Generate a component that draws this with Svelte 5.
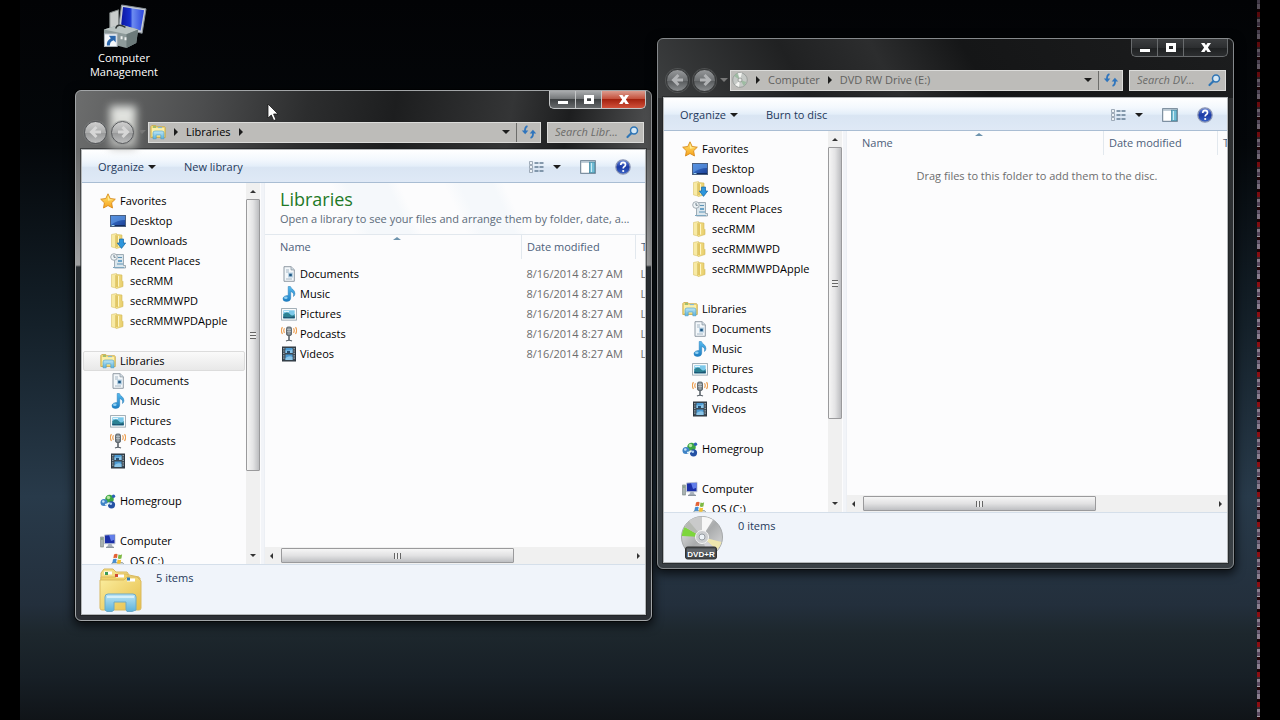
<script>
  const navGroups = [
    {
      label: "Favorites",
      icon: "star",
      items: [
        { label: "Desktop", icon: "desktop" },
        { label: "Downloads", icon: "downloads" },
        { label: "Recent Places", icon: "recent" },
        { label: "secRMM", icon: "folder" },
        { label: "secRMMWPD", icon: "folder" },
        { label: "secRMMWPDApple", icon: "folder" },
      ],
    },
    {
      label: "Libraries",
      icon: "libraries",
      items: [
        { label: "Documents", icon: "documents" },
        { label: "Music", icon: "music" },
        { label: "Pictures", icon: "pictures" },
        { label: "Podcasts", icon: "podcasts" },
        { label: "Videos", icon: "videos" },
      ],
    },
    { label: "Homegroup", icon: "homegroup", items: [] },
    { label: "Computer", icon: "computer", items: [{ label: "OS (C:)", icon: "drive" }] },
  ];

  const libraries = ["Documents", "Music", "Pictures", "Podcasts", "Videos"];

  const windows = [
    {
      id: "libraries",
      active: true,
      icon: "libraries",
      path: ["Libraries"],
      search: "Search Libr...",
      action: "New library",
      selected: "Libraries",
      title: "Libraries",
      subtitle: "Open a library to see your files and arrange them by folder, date, a...",
      rows: libraries.map((name) => ({
        name,
        icon: name.toLowerCase(),
        date: "8/16/2014 8:27 AM",
        type: "Library",
      })),
      detailIcon: "bigLibrary",
      status: "5 items",
    },
    {
      id: "dvd",
      active: false,
      icon: "disc",
      path: ["Computer", "DVD RW Drive (E:)"],
      search: "Search DV...",
      action: "Burn to disc",
      selected: "",
      rows: [],
      message: "Drag files to this folder to add them to the disc.",
      detailIcon: "bigDisc",
      status: "0 items",
    },
  ];
</script>

{#snippet icon(name)}
  <svg class="icon" viewBox="0 0 16 16" aria-hidden="true">
    {#if name === "star"}
      <path d="M8 .8l2.2 4.7 5.1.7-3.7 3.6.9 5.2L8 12.5 3.5 15l.9-5.2L.7 6.2l5.1-.7z" fill="url(#gold)" stroke="#d88a1c" stroke-width=".9" />
      <path d="M8 2.6l1.5 3.6 3.7.5-5.2 1z" fill="#fff3a8" opacity=".8" />
    {:else if name === "desktop"}
      <rect x=".5" y="2.5" width="15" height="11" fill="url(#screen)" stroke="#4a5f80" />
      <path d="M1 3h14v4Q7 7 1 12z" fill="#6ca5ec" opacity=".55" />
      <path d="M1 12.5h14" stroke="#122c60" />
      <path d="M1.5 12.5h3" stroke="#9fd4f0" />
    {:else if name === "folder" || name === "downloads"}
      <path d="M1.5 1.500l5-1v14.600l-5-1.200z" fill="#f8eaa4" stroke="#dcc56c" stroke-width=".6" />
      <path d="M5.500 2.500l1.500-1 5 .5v5.500l1 1v5l-6.500 2-1-.8z" fill="url(#folder)" stroke="#d3ba5c" stroke-width=".6" />
      <path d="M7 2.500v11.500" stroke="#cfae45" />
      <path d="M8.500 3v10.500" stroke="#fff6c4" />
      {#if name === "downloads"}
        <path d="M9.500 6h4v4h2.2l-4.2 5.4L7.3 10h2.2z" fill="#2f96dc" stroke="#1768a8" stroke-width=".7" />
      {/if}
    {:else if name === "recent"}
      <path d="M4.500 1.500h9v11h2v2.500h-11z" fill="#dbe6ec" stroke="#8c9aa5" stroke-width=".8" />
      <path d="M8 4.500h4M7 11h6" stroke="#5d93b6" />
      <path d="M8 7h4v2H8z" fill="#6ba3c8" />
      <circle cx="4" cy="4" r="3.300" fill="#eff4f6" stroke="#9aa4ab" stroke-width=".9" />
      <path d="M4 2v2.300h1.700" fill="none" stroke="#526575" stroke-width=".8" />
      <path d="M3 14.500h11" stroke="#7ea7c0" />
    {:else if name === "libraries"}
      <path d="M.8 2.500l1-1h4l1 1.200h7.800l.7 1v9.800H.8z" fill="#f2d978" stroke="#c6a74a" stroke-width=".8" />
      <path d="M2 4h12v8H2z" fill="#fbefa9" />
      <path d="M3 3h3" stroke="#55a561" />
      <path d="M8 3.600h4" stroke="#7ab8dd" />
      <path d="M3 14.800V9q0-2 2-2h7q2 0 2 2v5.800h-3.200V11H6.200v3.800z" fill="url(#stand)" stroke="#4b9bc2" stroke-width=".6" />
    {:else if name === "documents"}
      <path d="M3 .7h7l3.300 3v11.600H3z" fill="#f3f7fa" stroke="#84909b" stroke-width=".9" />
      <path d="M10 .7v3.200h3.300" fill="#d4dfe7" stroke="#84909b" stroke-width=".7" />
      <path d="M5 4h3M5 6h3M5 13h6" stroke="#91a5b5" stroke-width=".8" />
      <rect x="7" y="6.500" width="5" height="5" fill="#b9d2e3" />
      <rect x="8.200" y="7.700" width="2.600" height="2.600" fill="#1d5683" />
    {:else if name === "music"}
      <path d="M7.200 .5h2.200c.2 2.200 4.600 3.100 4.500 7-.1 1.600-.8 2.500-1.400 3 .7-2.800-.6-4.300-2.800-5v6.700q-.2 3.300-4.200 3.300-3.700-.2-3.500-2.800Q2.200 9.700 7.200 9.500z" fill="url(#note)" stroke="#2079b4" stroke-width=".5" />
      <ellipse cx="4.800" cy="11.700" rx="1.800" ry="1.200" fill="#a9e0fa" opacity=".8" />
    {:else if name === "pictures"}
      <rect x=".6" y="2.600" width="14.800" height="11.500" fill="#fff" stroke="#94a3ad" stroke-width=".9" />
      <rect x="2.300" y="4.300" width="11.400" height="8" fill="#7bc8ea" />
      <path d="M2.300 8q4-3 6.500 0t4.900 0v4.300H2.300z" fill="#2c8293" />
      <path d="M2.300 10.500q4 1.500 11.400-.3v2.100H2.300z" fill="#1c5372" />
      <path d="M3 5.500h5" stroke="#e4f6fc" />
    {:else if name === "podcasts"}
      <rect x="5.500" y="1" width="5" height="8.500" rx="1.500" fill="#7b848b" stroke="#4d555c" stroke-width=".8" />
      <path d="M6 3.500h4M6 5.500h4M8 1.500v7" stroke="#bfc7cc" stroke-width=".7" />
      <path d="M8 9.500v5" stroke="#5b636a" stroke-width="1.600" />
      <path d="M5 15q3-1.500 6 0" fill="none" stroke="#5b636a" stroke-width="1.200" />
      <path d="M3.500 2.200q-1.500 2.500 0 4.600M1.500 1.200Q-.8 4.500 1.500 8M12.500 2.200q1.500 2.500 0 4.600M14.500 1.200q2.300 3.300 0 6.800" fill="none" stroke="#eda053" stroke-width="1.200" />
    {:else if name === "videos"}
      <rect x="1.500" y="1" width="13" height="14" fill="#3d4a55" stroke="#2d3740" />
      <path d="M2.800 2v12M13.200 2v12" stroke="#a9b4bb" stroke-width="1.200" stroke-dasharray="1.200 1.200" />
      <path d="M4.500 2h7v5h-7zM4.500 8.500h7V14h-7z" fill="#4d9bd4" />
      <path d="M4.500 4q4 1.500 7-1v4h-7zM4.500 12q4-3 7-1v3h-7z" fill="#8cc6e8" />
      <path d="M6 5h3v2H6z" fill="#274f73" />
    {:else if name === "homegroup"}
      <circle cx="9.500" cy="6" r="4.300" fill="#3da745" />
      <circle cx="8.500" cy="4.500" r="1.700" fill="#b7e6a4" />
      <circle cx="4" cy="9.500" r="3.500" fill="#3f83c6" />
      <circle cx="3.300" cy="8.500" r="1.300" fill="#c0e2f7" />
      <circle cx="11.500" cy="11.800" r="3.600" fill="#2451a4" />
      <circle cx="10.800" cy="10.700" r="1.300" fill="#aed0f4" />
      <circle cx="13.500" cy="3.200" r="1.700" fill="#2c62b5" />
      <path d="M5 11.500q3 .5 4.500-2" fill="none" stroke="#e6f5f9" stroke-width="1.500" />
    {:else if name === "computer"}
      <rect x=".7" y="4" width="2.600" height="10" fill="#a8b2b1" stroke="#6f7a79" stroke-width=".6" />
      <path d="M1.300 6h1.300" stroke="#4c8944" />
      <path d="M4.500 2l10.500-.7v9.500H4.500z" fill="#1b2fa8" stroke="#c4cad6" />
      <path d="M9 2l5.500-.3v5L11 8z" fill="#627eea" />
      <path d="M8.500 11h3l1.500 3H7z" fill="#aab3bd" />
      <path d="M6 14.300h8" stroke="#707b86" />
    {:else if name === "drive"}
      <path d="M2.500 9.500h10l3 3.500H.5z" fill="#d1d9d8" stroke="#7c8b8d" stroke-width=".7" />
      <path d="M.5 13h15v2.500H.5z" fill="#7ca5af" />
      <path d="M4 1.500q2-1.300 3.600-.3L7 5q-2-.7-3.700.3z" fill="#e36235" />
      <path d="M8.500 1.500q2 .9 3.600-.2L11.400 5.500q-1.700.8-3.500 0z" fill="#7eb944" />
      <path d="M3 6.300q1.900-1 3.700-.2L6 10q-2-.7-3.700.3z" fill="#468ed1" />
      <path d="M7.600 6.500q1.900.9 3.600-.1l-.7 4q-1.700.9-3.500 0z" fill="#f3c034" />
    {:else if name === "disc"}
      <circle cx="8" cy="8" r="7.300" fill="#c5c9c6" stroke="#8a8f8c" stroke-width=".7" />
      <path d="M8 8L2 4l3-3zM8 8l6.500 2-2.500 4z" fill="#9ebba2" />
      <path d="M8 8L6 1l4-.2zM8 8l-1 7-4-2z" fill="#f3f4f1" />
      <circle cx="8" cy="8" r="2" fill="#e9eae8" stroke="#858a87" stroke-width=".7" />
    {:else if name === "search"}
      <circle cx="10" cy="6.500" r="3.500" fill="#d5e7f4" stroke="#2f75b5" stroke-width="1.500" />
      <path d="M7 9.500L3.500 13" stroke="#2f75b5" stroke-width="2.200" stroke-linecap="round" />
    {:else if name === "refresh"}
      <path d="M6.500 2.200Q3.700 3 4 7.500" fill="none" stroke="#2f75bd" stroke-width="1.800" />
      <path d="M.8 6.500h6.500L4.200 10.300z" fill="#2f75bd" />
      <path d="M9.500 13.800q2.800-.8 2.500-5.300" fill="none" stroke="#2f75bd" stroke-width="1.800" />
      <path d="M15.200 9.500H8.700l3.200-3.800z" fill="#2f75bd" />
    {:else if name === "views"}
      <path d="M1.500 2.500h3v3h-3zM1.500 6.500h3v3h-3zM1.500 10.500h3v3h-3z" fill="#edf2f6" stroke="#8b99a8" stroke-width=".8" />
      <path d="M6.500 4h9M6.500 8h9M6.500 12h9" stroke="#637c93" stroke-width="1.300" stroke-dasharray="4 1" />
    {:else if name === "preview"}
      <rect x=".7" y="1.700" width="14.600" height="12.600" fill="#fff" stroke="#65798b" />
      <path d="M1 3h14" stroke="#a7b9c7" stroke-width="1.400" />
      <rect x="9.500" y="3.200" width="5.200" height="10.500" fill="#70bcd5" stroke="#458ba4" stroke-width=".8" />
      <path d="M11.500 4v9" stroke="#cdebf2" />
    {:else if name === "help"}
      <circle cx="8" cy="8" r="7.200" fill="url(#helpBlue)" stroke="#8d97b4" stroke-width="1.200" />
      <path d="M5.700 6q.2-2.600 2.400-2.600 2.400.1 2.400 2.300 0 1.200-1.400 2-.9.500-.9 1.700" fill="none" stroke="#fff" stroke-width="1.700" />
      <circle cx="8.200" cy="12" r="1.100" fill="#fff" />
    {/if}
  </svg>
{/snippet}

{#snippet caret(dir)}
  <span class="caret {dir}" aria-hidden="true"></span>
{/snippet}

<svg class="defs" aria-hidden="true">
  <defs>
    <linearGradient id="gold" x2="0" y2="1"><stop stop-color="#ffe873" /><stop offset="1" stop-color="#f7a11b" /></linearGradient>
    <linearGradient id="screen" x2="1" y2="1"><stop stop-color="#3d7bd6" /><stop offset="1" stop-color="#1b3f94" /></linearGradient>
    <linearGradient id="folder" x2="1" y2="0"><stop stop-color="#f7e48c" /><stop offset="1" stop-color="#e6cc6b" /></linearGradient>
    <linearGradient id="stand" x2="0" y2="1"><stop stop-color="#bde6f5" /><stop offset="1" stop-color="#5db2db" /></linearGradient>
    <linearGradient id="note" x2="0" y2="1"><stop stop-color="#55b9ee" /><stop offset="1" stop-color="#1d7fc4" /></linearGradient>
    <linearGradient id="helpBlue" x2="0" y2="1"><stop stop-color="#6c8be0" /><stop offset=".5" stop-color="#1c3aa4" /><stop offset="1" stop-color="#3c66c8" /></linearGradient>
    <linearGradient id="bigFolder" x2="1" y2="1"><stop stop-color="#fbeea0" /><stop offset="1" stop-color="#e6bd45" /></linearGradient>
    <linearGradient id="silver" x2="1" y2="1"><stop stop-color="#f4f4f4" /><stop offset=".5" stop-color="#a9abac" /><stop offset="1" stop-color="#e4e4e4" /></linearGradient>
    <linearGradient id="blueScreen" x2="1" y2="0"><stop stop-color="#0b16a0" /><stop offset=".4" stop-color="#1731d0" /><stop offset=".5" stop-color="#6d8cf0" /><stop offset="1" stop-color="#2a44dc" /></linearGradient>
  </defs>
</svg>

<main class="desktop">
  <a class="shortcut" href="#computer-management">
    <svg viewBox="0 0 46 46" aria-hidden="true">
      <path d="M8 10l9-3v22l-9 3z" fill="#c8cccb" stroke="#7e8584" />
      <path d="M20 2l25 4-4 25-24-6z" fill="#c9cfd6" stroke="#858d95" />
      <path d="M21.500 4L43 7.300 39.500 28l-20-5z" fill="url(#blueScreen)" />
      <path d="M2 27l17-5 18 5-2 14-10 5-23-6z" fill="#8d9a9a" />
      <path d="M2 27l17-5 18 5-12 5z" fill="#b9c3c2" />
      <path d="M25 32l12-5-2 14-10 5z" fill="#6c7a7a" />
      <path d="M14 26q2-6 10-1" fill="none" stroke="#2e3434" stroke-width="1.500" />
      <path d="M20 34v3M24 35v3" stroke="#edf0ef" stroke-width="2" />
      <rect x="2.500" y="31.500" width="13" height="13" fill="#f4f7fa" stroke="#a7b0b8" />
      <path d="M5 43.500q-.6-5 4-7.500l-2-2.500h7v7L12 38q-4 1-4 5.500z" fill="#2a66ac" />
    </svg>
    <span>Computer<br />Management</span>
  </a>

  {#each windows as win}
    <section class="window {win.id}" class:active={win.active} aria-label={win.path.join(" ")}>
      <header class="glass">
        <div class="caption">
          <button class="min" aria-label="Minimize"><svg viewBox="0 0 16 12"><path d="M3 7h10v3H3z" /></svg></button>
          <button class="max" aria-label="Maximize"><svg viewBox="0 0 16 12"><path fill-rule="evenodd" d="M3 1h10v9H3zM6 4v3h4V4z" /></svg></button>
          <button class="close" aria-label="Close"><svg viewBox="0 0 16 12"><path d="M3 1h3.500L8 3.200 9.500 1H13L9.900 5.500 13 10H9.500L8 7.800 6.500 10H3l3.100-4.500z" /></svg></button>
        </div>
        <div class="location">
          <div class="travel">
            <button aria-label="Back"><svg viewBox="0 0 16 16"><path d="M8.500 3L3.500 8l5 5M4 8h9" /></svg></button>
            <button aria-label="Forward"><svg viewBox="0 0 16 16"><path d="M7.500 3l5 5-5 5M12 8H3" /></svg></button>
            {@render caret("down")}
          </div>
          <div class="address">
            <div class="crumbs">
              {@render icon(win.icon)}
              {@render caret("right")}
              {#each win.path as part, i}
                <button>{part}</button>
                {#if win.active || i < win.path.length - 1}{@render caret("right")}{/if}
              {/each}
            </div>
            <button class="drop" aria-label="Previous locations">{@render caret("down")}</button>
            <button class="refresh" aria-label="Refresh">{@render icon("refresh")}</button>
          </div>
          <label class="search">
            <input type="text" placeholder={win.search} aria-label="Search" />
            {@render icon("search")}
          </label>
        </div>
      </header>

      <div class="client">
        <div class="toolbar">
          <button>Organize {@render caret("down")}</button>
          <button>{win.action}</button>
          <div class="tools">
            <button aria-label="Change your view">{@render icon("views")}{@render caret("down")}</button>
            <button aria-label="Show the preview pane">{@render icon("preview")}</button>
            <button aria-label="Help">{@render icon("help")}</button>
          </div>
        </div>

        <div class="panes">
          <nav>
            {#each navGroups as group}
              <ul>
                <li>
                  <a href="#{group.label}" class:selected={group.label === win.selected}>{@render icon(group.icon)}{group.label}</a>
                </li>
                {#each group.items as item}
                  <li class="child">
                    <a href="#{item.label}">{@render icon(item.icon)}{item.label}</a>
                  </li>
                {/each}
              </ul>
            {/each}
          </nav>
          <div class="scroll vertical" aria-hidden="true">
            {@render caret("up")}
            <div class="track"><div class="thumb"><i></i></div></div>
            {@render caret("down")}
          </div>

          <div class="content">
            {#if win.title}
              <div class="heading">
                <h1>{win.title}</h1>
                <p>{win.subtitle}</p>
              </div>
            {/if}
            <div class="files">
              <table>
                <thead>
                  <tr>
                    <th class="name">Name<span class="sort"></span></th>
                    <th class="date">Date modified</th>
                    <th class="type">Type</th>
                  </tr>
                </thead>
                <tbody>
                  {#each win.rows as row}
                    <tr>
                      <td><div class="file">{@render icon(row.icon)}{row.name}</div></td>
                      <td class="muted">{row.date}</td>
                      <td class="muted">{row.type}</td>
                    </tr>
                  {/each}
                </tbody>
              </table>
              {#if win.message}
                <p class="message">{win.message}</p>
              {/if}
            </div>
            <div class="scroll horizontal" aria-hidden="true">
              {@render caret("left")}
              <div class="track"><div class="thumb"><i></i></div></div>
              {@render caret("right")}
            </div>
          </div>
        </div>

        <footer>
          {#if win.detailIcon === "bigLibrary"}
            <svg class="big" viewBox="0 0 44 44" aria-hidden="true">
              <path d="M3 5l3-4h9l3 3h11l2 3 10 2v31H3z" fill="#f3dd83" stroke="#d9b960" />
              <path d="M6 3.500h8v3H6z" fill="#fff" /><path d="M7 4h3v3H7z" fill="#3d9a55" />
              <path d="M3 9h14l3-3h9l3 4h10v30H3z" fill="#f0d267" stroke="#d9b960" />
              <path d="M18 6.500h8v3h-8z" fill="#fff" /><path d="M17 6h3v3h-3z" fill="#cf4a32" />
              <path d="M2 12h24l3-3h10l4 4v27q0 2-2 2H4q-2 0-2-2z" fill="url(#bigFolder)" stroke="#d9b960" />
              <path d="M29 10.500h8v3h-8z" fill="#fff" /><path d="M29 9.500h3v3h-3z" fill="#2f7bb3" />
              <path d="M7 42V29q0-3 3-3h25q3 0 3 3v13l-4 1.500h-5l-1-2V34H16v8l-2 1.500H9z" fill="url(#stand)" stroke="#6caac8" />
              <path d="M9 29h27" stroke="#e1f5fb" stroke-width="2" opacity=".8" />
            </svg>
          {:else}
            <svg class="big" viewBox="0 0 44 44" aria-hidden="true">
              <circle cx="22" cy="21" r="20.500" fill="url(#silver)" stroke="#a5a8a9" />
              <path d="M22 21L9 5Q15 .5 22 .8z" fill="#c9caca" />
              <path d="M22 21L22 .8q6 0 11 3z" fill="#f7f7f7" />
              <path d="M22 21L1.700 20q.4-5 3-9z" fill="#7dd63c" />
              <path d="M22 21L4.700 11Q6 8.500 9 5z" fill="#b5b9b2" />
              <path d="M22 21l19.500 5q-1 4.500-4.500 8z" fill="#efe7ae" />
              <path d="M22 21l15 13q-4 4.500-9 6z" fill="#d3d3d8" />
              <circle cx="22" cy="21" r="6.500" fill="#cbcdd0" stroke="#f4f4f4" />
              <circle cx="22" cy="21" r="3" fill="#eef3f8" stroke="#979da3" />
              <rect x="5.500" y="31" width="31" height="12" rx="2" fill="#44484b" stroke="#333" />
              <path d="M7 32.500h28v4H7z" fill="#777c80" opacity=".6" />
              <text x="21" y="40.500" text-anchor="middle">DVD+R</text>
            </svg>
          {/if}
          <span>{win.status}</span>
        </footer>
      </div>
    </section>
  {/each}

  <svg class="cursor" viewBox="0 0 12 19" aria-hidden="true">
    <path d="M1 1v14l3.300-3 2.400 5.600 2.200-1L6.600 11H11z" fill="#fff" stroke="#1a1a1a" stroke-width=".8" />
  </svg>
  <div class="edge"></div>
</main>

<style>
  :global(body) {
    margin: 0;
    background: #000;
  }

  .desktop {
    position: relative;
    min-height: 100vh;
    margin: 0 20px;
    overflow: hidden;
    font: 11px/20px "Open Sans", "Noto Sans", sans-serif;
    color: #000;
    background: linear-gradient(#020305, #04070a 20%, #142029 45%, #283a4a 69%, #232f3c 84%, #1d272d 88%, #171f26 94%, #101418);
  }

  .defs {
    position: absolute;
    width: 0;
    height: 0;
  }

  button {
    padding: 0;
    border: 0;
    background: none;
    font: inherit;
    color: inherit;
  }

  a {
    color: inherit;
    text-decoration: none;
  }

  .icon {
    flex: none;
    display: block;
    width: 16px;
    height: 16px;
  }

  .caret {
    flex: none;
    display: inline-block;
    width: 0;
    height: 0;
    border: 4px solid transparent;
    color: #1c1c1c;
  }

  .caret.down {
    border-top-color: currentColor;
    border-bottom: 0;
  }

  .caret.up {
    border-bottom-color: currentColor;
    border-top: 0;
  }

  .caret.right {
    border-left-color: currentColor;
    border-right: 0;
  }

  .caret.left {
    border-right-color: currentColor;
    border-left: 0;
  }

  .shortcut {
    position: absolute;
    top: 3px;
    left: 64px;
    width: 80px;
    display: flex;
    flex-direction: column;
    align-items: center;
    gap: 3px;
    line-height: 14px;
    text-align: center;
    color: #fff;
    text-shadow: 0 1px 2px #000;
  }

  .shortcut svg {
    width: 45px;
    height: 45px;
  }

  .window {
    position: absolute;
    box-sizing: border-box;
    width: calc(45vw + 1px);
    padding: 0 5px 5px;
    border: 1px solid #85898c;
    border-radius: 6px;
    background: linear-gradient(#2b2c2d, #222426 30%, #30363a 60%, #33393e);
    box-shadow: 0 0 0 1px #0009, 0 3px 10px 2px #000a;
  }

  .window.libraries {
    top: 90px;
    left: 55px;
    border-color: #a2a5a7;
    background:
      linear-gradient(100deg, #6c6d6d, #4c4d4e 22%, #2c2d2e 40%, #1d1e1f 55%, #343536 75%, #1d1e1f 85%, #515253) 0 0 / 100% 59px no-repeat,
      linear-gradient(#6a6b6b 60px, #a0a1a2 174px, #2a2f33 176px, #2d3035);
  }

  .window.dvd {
    top: 38px;
    right: 26px;
    background:
      linear-gradient(60deg, #3d3f40, #202122 25%, #2c2d2e 40%, #151617 55%, #1c1d1e) 0 0 / 100% 59px no-repeat,
      linear-gradient(#303132, #2a2e31 50%, #3a4045);
  }

  /* desktop icon label showing through the glass */
  .active .glass::before {
    content: "";
    position: absolute;
    top: 15px;
    left: 34px;
    width: 26px;
    height: 42px;
    background: linear-gradient(#e9ebe8, #d3d4cf 60%, #a8a9a8);
    filter: blur(4px);
  }

  .caption {
    display: flex;
    justify-content: flex-end;
    height: 18px;
  }

  .caption button {
    box-sizing: border-box;
    width: 26px;
    border: 1px solid #686b6d;
    border-width: 0 0 1px 1px;
    background: linear-gradient(#3c3e40, #2c2e30 50%, #1e2021 50%, #2c2e30);
  }

  .caption button.min {
    border-bottom-left-radius: 5px;
  }

  .caption button.close {
    width: 45px;
    border-right-width: 1px;
    border-bottom-right-radius: 5px;
  }

  .caption svg {
    display: block;
    width: 16px;
    height: 12px;
    margin: 0 auto;
    fill: #fff;
  }

  .active .caption button {
    border-color: #c4c6c7;
    background: linear-gradient(#a9abad, #76797b 45%, #3e4143 50%, #66696b);
  }

  .active .caption button.close {
    background: linear-gradient(#dc9c8e, #c5523e 45%, #a32310 50%, #d1503a);
  }

  .location {
    position: relative;
    display: flex;
    align-items: center;
    height: 22px;
    padding: 12px 2px 6px 3px;
  }

  .travel {
    display: flex;
    align-items: center;
    gap: 4px;
    color: #8c8e90;
  }

  .travel button {
    box-sizing: border-box;
    width: 23px;
    height: 23px;
    border: 1px solid #3a3c3d;
    border-radius: 50%;
    background: linear-gradient(#96989a, #6c6f71 50%, #55585a 50%, #8b8e90);
    box-shadow: 0 0 0 1px #85878855;
  }

  .active .travel button {
    border-color: #55575a;
    background: linear-gradient(#cfcfcf, #abacac 50%, #969798 50%, #bcbdbd);
  }

  .travel svg {
    display: block;
    width: 16px;
    height: 16px;
    margin: auto;
    fill: none;
    stroke: #b2b4b6;
    stroke-width: 3;
  }

  .active .travel svg {
    stroke: #d6d6d6;
  }

  .travel .caret {
    color: #777;
  }

  .address {
    flex: 1;
    display: flex;
    box-sizing: border-box;
    height: 21px;
    margin: 0 6px 0 2px;
    border: 1px solid #dcdcda;
    background: #bdbcb9;
  }

  .crumbs {
    flex: 1;
    display: flex;
    align-items: center;
    gap: 8px;
    padding-left: 1px;
  }

  .dvd .crumbs {
    color: #62625f;
  }

  .address .drop {
    width: 20px;
    display: grid;
    place-items: center;
  }

  .address .refresh {
    width: 24px;
    display: grid;
    place-items: center;
    border-left: 1px solid #6d6d6b;
  }

  .search {
    box-sizing: border-box;
    display: flex;
    align-items: center;
    width: 97px;
    height: 21px;
    padding: 0 3px 0 7px;
    border: 1px solid #dcdcda;
    background: #bdbcb9;
  }

  .search input {
    flex: 1;
    min-width: 0;
    padding: 0;
    border: 0;
    outline: 0;
    background: none;
    font: inherit;
  }

  .search input::placeholder {
    font-style: italic;
    color: #6b6b69;
    opacity: 1;
  }

  .client {
    border: 1px solid #b4b7b9;
    background: #fcfcfd;
    box-shadow: 0 0 0 1px #1a1c1e88;
  }

  .toolbar {
    box-sizing: border-box;
    display: flex;
    align-items: center;
    gap: 28px;
    height: 33px;
    padding: 2px 14px 0 16px;
    border-bottom: 1px solid #a9bdd3;
    background: linear-gradient(#fff, #f3f8fd 30%, #e4eef9 50%, #d9e5f3 55%, #dfe9f6);
    color: #1e395b;
  }

  .toolbar button {
    display: flex;
    align-items: center;
    gap: 4px;
  }

  .tools {
    display: flex;
    gap: 19px;
    margin-left: auto;
  }

  .tools button {
    gap: 9px;
  }

  .panes {
    display: flex;
    height: 381px;
  }

  nav {
    width: 164px;
    padding-top: 8px;
    box-sizing: border-box;
    overflow: hidden;
  }

  ul {
    margin: 0 0 20px;
    padding: 0;
    list-style: none;
  }

  nav a {
    display: flex;
    align-items: center;
    gap: 4px;
    box-sizing: border-box;
    height: 20px;
    margin: 0 1px;
    padding-left: 17px;
    white-space: nowrap;
  }

  nav .child a {
    padding-left: 27px;
  }

  nav a.selected {
    padding-left: 16px;
    border: 1px solid #dcdcdc;
    border-radius: 2px;
    background: linear-gradient(#fafafa, #e8e8e8);
  }

  .scroll {
    display: flex;
    align-items: center;
    background: #f0f0f0;
  }

  .scroll .caret {
    border-width: 3px;
    color: #333;
  }

  .track {
    flex: 1;
    display: flex;
  }

  .thumb {
    display: grid;
    place-items: center;
    box-sizing: border-box;
    border: 1px solid #9a9a9c;
    border-radius: 1px;
  }

  .vertical {
    flex-direction: column;
    width: 14px;
    padding: 7px 0;
  }

  .vertical .track {
    margin: 6px 0;
    flex-direction: column;
  }

  .vertical .thumb {
    width: 14px;
    height: 78%;
    background: linear-gradient(90deg, #f5f5f5, #e4e4e5 50%, #bcbdc0);
  }

  .vertical i {
    width: 6px;
    height: 7px;
    background: repeating-linear-gradient(#666 0 1px, #eee 1px 3px);
  }

  .content {
    flex: 1;
    display: flex;
    flex-direction: column;
    min-width: 0;
    margin-left: 4px;
    border-left: 1px solid #eceff4;
    box-shadow: -3px 0 #f2f4f8;
  }

  .heading {
    height: 51px;
    padding-left: 15px;
    background: linear-gradient(65deg, transparent 22%, #f5f8fb 26% 36%, transparent 39% 50%, #f5f8fb 54% 62%, transparent 65%);
    white-space: nowrap;
    overflow: hidden;
  }

  h1 {
    margin: 4px 0 0;
    font-size: 18px;
    line-height: 24px;
    font-weight: 400;
    color: #1f7a28;
  }

  .heading p {
    margin: 0;
    line-height: 16px;
    color: #5c6b7a;
  }

  .files {
    flex: 1;
    overflow: hidden;
  }

  table {
    width: 440px;
    border-collapse: collapse;
    table-layout: fixed;
  }

  .heading + .files table {
    border-top: 1px solid #e2e8ee;
  }

  th,
  td {
    height: 20px;
    padding: 0;
    font-weight: 400;
    text-align: left;
    white-space: nowrap;
  }

  th {
    position: relative;
    height: 24px;
    padding-left: 5px;
    border-right: 1px solid #e2e8ee;
    color: #4c607a;
  }

  th.name {
    width: 241px;
    padding-left: 15px;
  }

  th.date {
    width: 108px;
  }

  .sort {
    position: absolute;
    top: 2px;
    left: 50%;
    border: 4px solid transparent;
    border-top: 0;
    border-bottom: 3px solid #6d93ad;
  }

  tbody tr:first-child td {
    padding-top: 5px;
  }

  .file {
    display: flex;
    align-items: center;
    gap: 3px;
    padding-left: 16px;
  }

  td.muted {
    padding-left: 5px;
    color: #6d6d6d;
  }

  .message {
    margin: 11px 0 0;
    text-align: center;
    color: #6d6d6d;
  }

  .horizontal {
    height: 17px;
    padding: 0 5px;
  }

  .horizontal .track {
    margin: 0 8px;
  }

  .horizontal .thumb {
    width: 67%;
    height: 15px;
    background: linear-gradient(#f6f6f6, #e2e2e3 50%, #bebfc2);
  }

  .horizontal i {
    width: 7px;
    height: 6px;
    background: repeating-linear-gradient(90deg, #666 0 1px, #eee 1px 3px);
  }

  footer {
    box-sizing: border-box;
    display: flex;
    gap: 14px;
    height: 50px;
    padding: 3px 16px;
    border-top: 1px solid #d5dfea;
    background: #f0f4fa;
    color: #1e395b;
  }

  .big {
    width: 44px;
    height: 44px;
  }

  .big text {
    font: bold 8px "Liberation Sans", sans-serif;
    fill: #fff;
  }

  .cursor {
    position: absolute;
    top: 103px;
    left: 247px;
    width: 12px;
    height: 19px;
  }

  .edge {
    position: absolute;
    top: 0;
    right: 0;
    bottom: 0;
    width: 3px;
    background:
      linear-gradient(#0006, transparent 40%),
      repeating-linear-gradient(#6d6077 0 3px, #54485c 3px 4px, #8b7f90 4px 9px, #1a0508 9px 12px, #8d0d12 12px 17px, #3a2a30 17px 19px, #8b8090 19px 22px, #5b4a60 22px 26px, #a5a0a8 26px 27px, #260508 27px 30px);
  }
</style>
